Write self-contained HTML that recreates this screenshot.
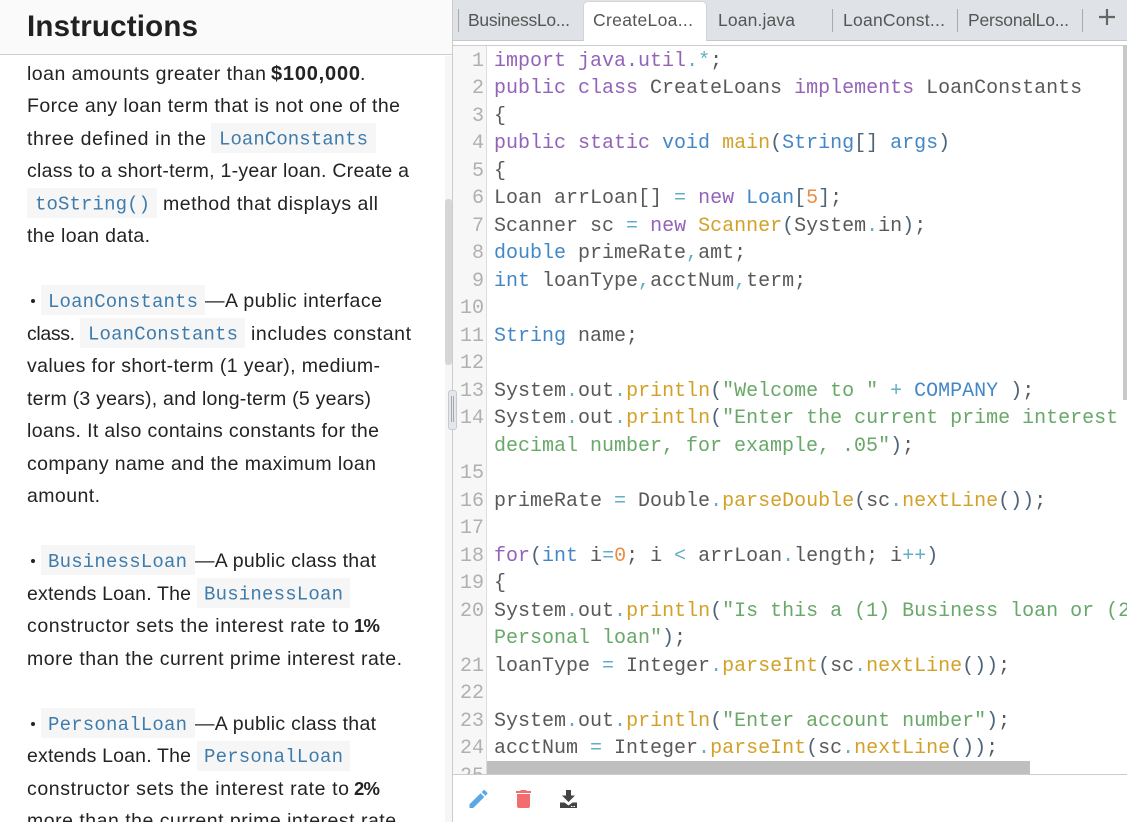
<!DOCTYPE html>
<html><head><meta charset="utf-8"><style>
html,body{margin:0;padding:0;background:#fff}
body{width:1127px;height:822px;overflow:hidden;position:relative;font-family:"Liberation Sans",sans-serif}
.a{position:absolute}
svg{position:absolute;left:0;top:0}
.t{font:19.5px "Liberation Sans",sans-serif;fill:#232323}
.b{font:bold 20.5px "Liberation Sans",sans-serif;fill:#232323}
.c{font:19px "Liberation Mono",monospace;fill:#3f7cac}
.tab{font:17.5px "Liberation Sans",sans-serif;fill:#555}
#code{position:absolute;left:0;top:1.5px;width:1127px;height:760px}
.r{position:absolute;left:494px;height:27.5px;font:20px/27.5px "Liberation Mono",monospace;color:#595959;white-space:pre}
.n{position:absolute;left:453px;width:31px;text-align:right;height:27.5px;font:20px/27.5px "Liberation Mono",monospace;color:#b0b0b0}
.k{color:#9263b8}.y{color:#4387c6}.m{color:#d2a128}.s{color:#68a868}.o{color:#62aec4}.d{color:#e98d45}.p{color:#4e6478}
</style></head><body>
<div class="a" style="left:0;top:0;width:452px;height:54px;background:#fafafa;border-bottom:1px solid #ccc"></div>
<div class="a" style="left:445px;top:56px;width:7px;height:766px;background:#f6f6f6"></div>
<div class="a" style="left:445px;top:199px;width:7px;height:166px;background:#d6d6d6;border-radius:3px"></div>
<div class="a" style="left:452px;top:0;width:1px;height:822px;background:#ccc"></div>
<div class="a" style="left:453px;top:0;width:674px;height:40px;background:#dfe2e6;border-bottom:1px solid #c8c8c8"></div>
<div class="a" style="left:583px;top:1px;width:124px;height:40px;background:#fff;border:1px solid #d2d4d8;border-bottom:0;border-radius:5px 5px 0 0;box-sizing:border-box"></div>
<div class="a" style="left:458px;top:9px;width:1px;height:23px;background:#aaa"></div>
<div class="a" style="left:832px;top:9px;width:1px;height:23px;background:#aaa"></div>
<div class="a" style="left:957px;top:9px;width:1px;height:23px;background:#aaa"></div>
<div class="a" style="left:1082px;top:9px;width:1px;height:23px;background:#aaa"></div>
<div class="a" style="left:453px;top:45px;width:674px;height:1px;background:#ccc"></div>
<div class="a" style="left:453px;top:46px;width:34px;height:728px;background:#f7f7f7;border-right:1px solid #ddd;box-sizing:border-box"></div>

<svg width="1127" height="822" viewBox="0 0 1127 822">
<text x="27" y="36" textLength="171" style="font:bold 29.500px 'Liberation Sans',sans-serif;fill:#212121">Instructions</text>
<rect x="211" y="123" width="165" height="30" fill="#f6f6f6"/>
<rect x="27" y="188" width="130" height="30" fill="#f6f6f6"/>
<rect x="41" y="285" width="164" height="30" fill="#f6f6f6"/>
<rect x="80" y="318" width="165" height="30" fill="#f6f6f6"/>
<rect x="41" y="545" width="154" height="30" fill="#f6f6f6"/>
<rect x="197" y="578" width="153" height="30" fill="#f6f6f6"/>
<rect x="41" y="708" width="154" height="30" fill="#f6f6f6"/>
<rect x="197" y="741" width="153" height="30" fill="#f6f6f6"/>

<text class="t" x="27" y="80" textLength="239">loan amounts greater than</text>
<text class="b" x="271" y="80" textLength="89" style="font-size:20px">$100,000</text>
<text class="t" x="360" y="80">.</text>
<text class="t" x="27" y="112" textLength="373">Force any loan term that is not one of the</text>
<text class="t" x="27" y="145" textLength="179">three defined in the</text>
<text class="c" x="219" y="144.500" textLength="149">LoanConstants</text>
<text class="t" x="27" y="177" textLength="382">class to a short-term, 1-year loan. Create a</text>
<text class="c" x="35" y="209.500" textLength="115">toString()</text>
<text class="t" x="163" y="210" textLength="215">method that displays all</text>
<text class="t" x="27" y="242" textLength="123">the loan data.</text>

<circle cx="33" cy="301" r="2" fill="#232323"/>
<text class="c" x="48" y="307" textLength="150">LoanConstants</text>
<text class="t" x="205" y="307" textLength="177">—A public interface</text>
<text class="t" x="27" y="340" textLength="48">class.</text>
<text class="c" x="88" y="339.500" textLength="150">LoanConstants</text>
<text class="t" x="251" y="340" textLength="160">includes constant</text>
<text class="t" x="27" y="372" textLength="353">values for short-term (1 year), medium-</text>
<text class="t" x="27" y="405" textLength="344">term (3 years), and long-term (5 years)</text>
<text class="t" x="27" y="437" textLength="352">loans. It also contains constants for the</text>
<text class="t" x="27" y="470" textLength="349">company name and the maximum loan</text>
<text class="t" x="27" y="502" textLength="73">amount.</text>

<circle cx="33" cy="561" r="2" fill="#232323"/>
<text class="c" x="48" y="567" textLength="139">BusinessLoan</text>
<text class="t" x="195" y="567" textLength="181">—A public class that</text>
<text class="t" x="27" y="600" textLength="164">extends Loan. The</text>
<text class="c" x="204" y="599.500" textLength="139">BusinessLoan</text>
<text class="t" x="27" y="632" textLength="322">constructor sets the interest rate to</text>
<text class="b" x="354" y="632" textLength="26" style="font-size:18.500px">1%</text>
<text class="t" x="27" y="665" textLength="375">more than the current prime interest rate.</text>

<circle cx="33" cy="724" r="2" fill="#232323"/>
<text class="c" x="48" y="730" textLength="139">PersonalLoan</text>
<text class="t" x="195" y="730" textLength="181">—A public class that</text>
<text class="t" x="27" y="762" textLength="164">extends Loan. The</text>
<text class="c" x="204" y="762" textLength="139">PersonalLoan</text>
<text class="t" x="27" y="795" textLength="322">constructor sets the interest rate to</text>
<text class="b" x="354" y="795" textLength="26" style="font-size:18.500px">2%</text>
<text class="t" x="27" y="827" textLength="375">more than the current prime interest rate.</text>

<text class="tab" x="468" y="26" textLength="102">BusinessLo...</text>
<text class="tab" x="593" y="26" textLength="100">CreateLoa...</text>
<text class="tab" x="718" y="26" textLength="77">Loan.java</text>
<text class="tab" x="843" y="26" textLength="102">LoanConst...</text>
<text class="tab" x="968" y="26" textLength="101">PersonalLo...</text>
<path d="M1107 9v16M1099 17h16" stroke="#666" stroke-width="2.200" fill="none"/>
</svg>

<div id="code">
<div class="n" style="top:46px">1</div><div class="r" style="top:46px"><span class="k">import</span> <span class="k">java</span><span class="k">.util</span><span class="o">.*</span>;</div>
<div class="n" style="top:73.5px">2</div><div class="r" style="top:73.5px"><span class="k">public class</span> CreateLoans <span class="k">implements</span> LoanConstants</div>
<div class="n" style="top:101px">3</div><div class="r" style="top:101px">{</div>
<div class="n" style="top:128.5px">4</div><div class="r" style="top:128.5px"><span class="k">public static</span> <span class="y">void</span> <span class="m">main</span><span class="p">(</span><span class="y">String</span><span class="p">[]</span> <span class="y">args</span><span class="p">)</span></div>
<div class="n" style="top:156px">5</div><div class="r" style="top:156px">{</div>
<div class="n" style="top:183.5px">6</div><div class="r" style="top:183.5px">Loan arrLoan[] <span class="o">=</span> <span class="k">new</span> <span class="y">Loan</span><span class="p">[</span><span class="d">5</span><span class="p">]</span>;</div>
<div class="n" style="top:211px">7</div><div class="r" style="top:211px">Scanner sc <span class="o">=</span> <span class="k">new</span> <span class="m">Scanner</span><span class="p">(</span>System<span class="o">.</span>in<span class="p">)</span>;</div>
<div class="n" style="top:238.5px">8</div><div class="r" style="top:238.5px"><span class="y">double</span> primeRate<span class="o">,</span>amt;</div>
<div class="n" style="top:266px">9</div><div class="r" style="top:266px"><span class="y">int</span> loanType<span class="o">,</span>acctNum<span class="o">,</span>term;</div>
<div class="n" style="top:293.5px">10</div>
<div class="n" style="top:321px">11</div><div class="r" style="top:321px"><span class="y">String</span> name;</div>
<div class="n" style="top:348.5px">12</div>
<div class="n" style="top:376px">13</div><div class="r" style="top:376px">System<span class="o">.</span>out<span class="o">.</span><span class="m">println</span><span class="p">(</span><span class="s">"Welcome to "</span> <span class="o">+</span> <span class="y">COMPANY</span> <span class="p">)</span>;</div>
<div class="n" style="top:403.5px">14</div><div class="r" style="top:403.5px;width:629px;overflow:hidden">System<span class="o">.</span>out<span class="o">.</span><span class="m">println</span><span class="p">(</span><span class="s">"Enter the current prime interest rate as a</span></div>
<div class="r" style="top:431px"><span class="s">decimal number, for example, .05"</span><span class="p">)</span>;</div>
<div class="n" style="top:458.5px">15</div>
<div class="n" style="top:486px">16</div><div class="r" style="top:486px">primeRate <span class="o">=</span> Double<span class="o">.</span><span class="m">parseDouble</span><span class="p">(</span>sc<span class="o">.</span><span class="m">nextLine</span><span class="p">())</span>;</div>
<div class="n" style="top:513.5px">17</div>
<div class="n" style="top:541px">18</div><div class="r" style="top:541px"><span class="k">for</span><span class="p">(</span><span class="y">int</span> i<span class="o">=</span><span class="d">0</span>; i <span class="o">&lt;</span> arrLoan<span class="o">.</span>length; i<span class="o">++</span><span class="p">)</span></div>
<div class="n" style="top:568.5px">19</div><div class="r" style="top:568.5px">{</div>
<div class="n" style="top:596px">20</div><div class="r" style="top:596px;width:633px;overflow:hidden">System<span class="o">.</span>out<span class="o">.</span><span class="m">println</span><span class="p">(</span><span class="s">"Is this a (1) Business loan or (2)</span></div>
<div class="r" style="top:623.5px"><span class="s">Personal loan"</span><span class="p">)</span>;</div>
<div class="n" style="top:651px">21</div><div class="r" style="top:651px">loanType <span class="o">=</span> Integer<span class="o">.</span><span class="m">parseInt</span><span class="p">(</span>sc<span class="o">.</span><span class="m">nextLine</span><span class="p">())</span>;</div>
<div class="n" style="top:678.5px">22</div>
<div class="n" style="top:706px">23</div><div class="r" style="top:706px">System<span class="o">.</span>out<span class="o">.</span><span class="m">println</span><span class="p">(</span><span class="s">"Enter account number"</span><span class="p">)</span>;</div>
<div class="n" style="top:733.5px">24</div><div class="r" style="top:733.5px">acctNum <span class="o">=</span> Integer<span class="o">.</span><span class="m">parseInt</span><span class="p">(</span>sc<span class="o">.</span><span class="m">nextLine</span><span class="p">())</span>;</div>
<div class="n" style="top:761px">25</div>
</div>

<div class="a" style="left:1123px;top:46px;width:4px;height:354px;background:#c9c9c9"></div>
<div class="a" style="left:487px;top:761px;width:543px;height:13px;background:#bfbfbf"></div>
<div class="a" style="left:453px;top:774px;width:674px;height:48px;background:#fff;border-top:1px solid #ccc;box-sizing:border-box"></div>
<div class="a" style="left:448px;top:390px;width:9px;height:40px;background:#e3e6ea;border:1px solid #c6cad0;border-radius:3px;box-sizing:border-box"></div>
<div class="a" style="left:451px;top:396px;width:1px;height:26px;background:#a8a8a8"></div>
<div class="a" style="left:453px;top:396px;width:1px;height:26px;background:#a8a8a8"></div>

<svg width="1127" height="822" viewBox="0 0 1127 822" style="pointer-events:none">
<g transform="translate(466.5 787)"><path fill="#5aa9e6" d="M3 17.25V21h3.75L17.81 9.94l-3.75-3.75L3 17.25zM20.71 7.04c.39-.39.39-1.02 0-1.41l-2.34-2.34c-.39-.39-1.02-.39-1.41 0l-1.83 1.83 3.75 3.75 1.83-1.830z"/></g>
<path fill="#f26d6d" d="M521 790h5l1 1h4v2h-15v-2h4zM517 794h13v12c0 1.200-.8 2-2 2h-9c-1.200 0-2-.8-2-2z"/>
<path fill="#444" d="M566 790h5v5.500h4l-6.500 6.500-6.500-6.500h4z"/>
<path fill="#444" d="M560 802.500h4.500l4 3 4-3h4.500v5.500h-17z"/>
<rect x="571" y="806" width="1.500" height="1" fill="#fff"/><rect x="573.500" y="806" width="1.500" height="1" fill="#fff"/>
</svg>
</body></html>
